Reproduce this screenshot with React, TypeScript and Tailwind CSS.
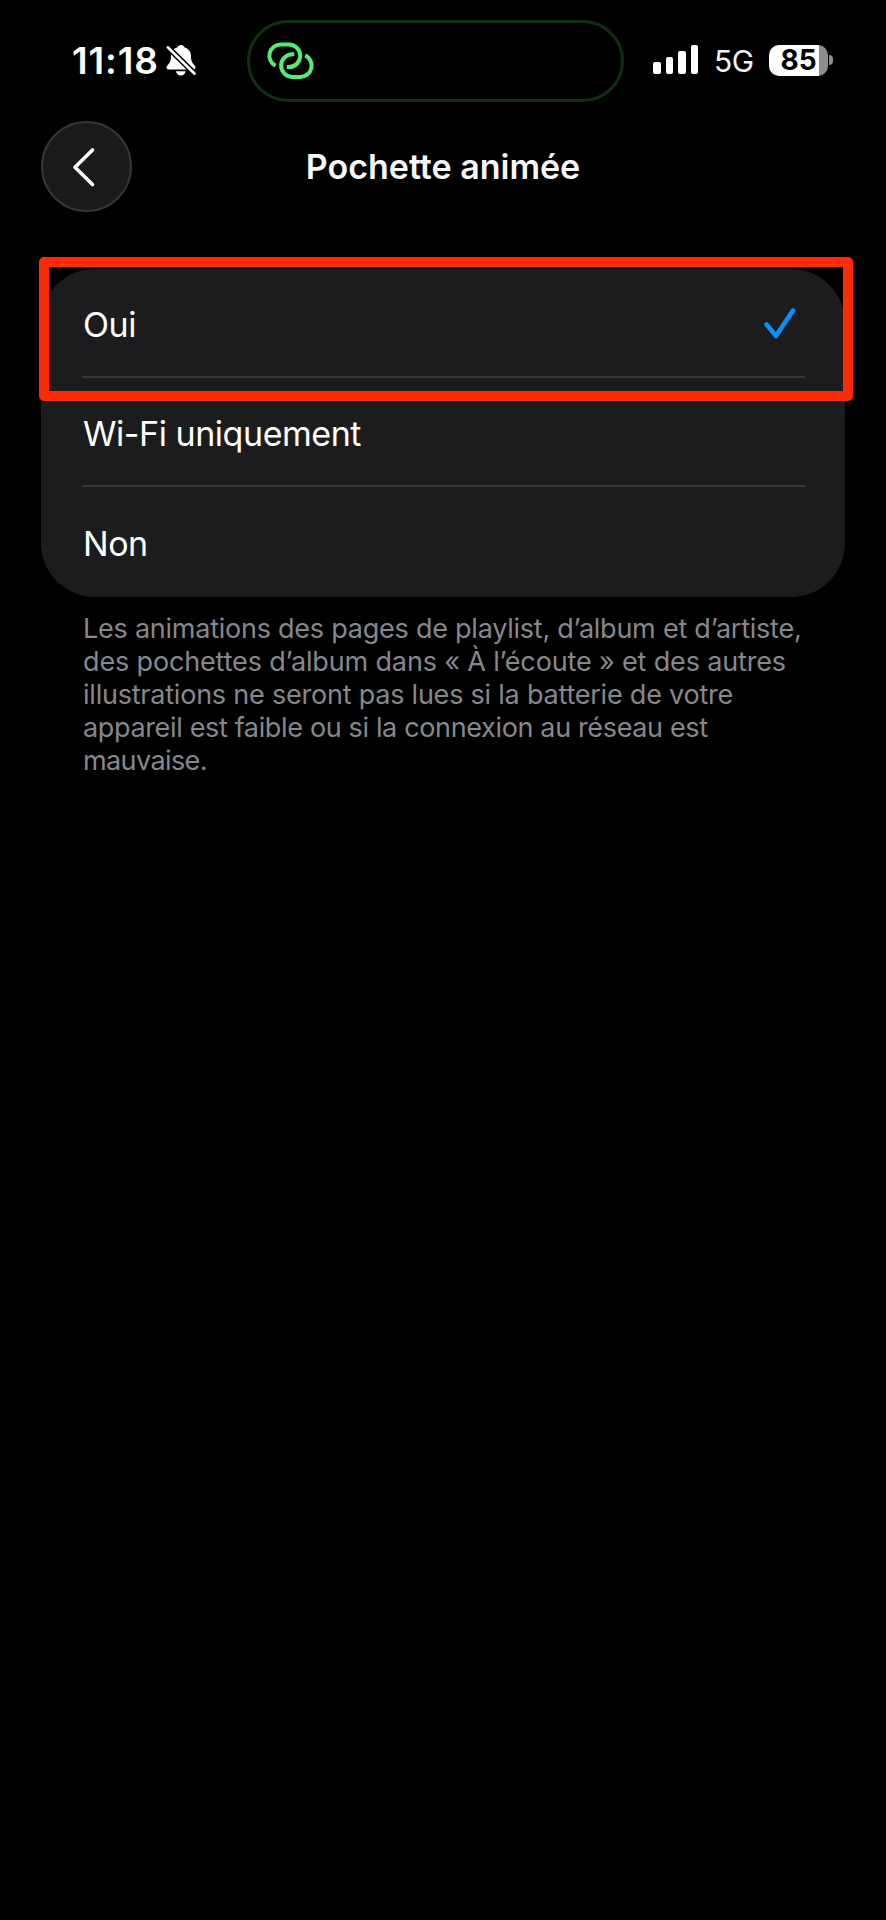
import React from 'react';

interface Option {
  id: string;
  label: string;
}

const options: Option[] = [
  { id: 'on', label: 'Oui' },
  { id: 'wifi', label: 'Wi-Fi uniquement' },
  { id: 'off', label: 'Non' },
];

const footnote = [
  { text: 'Les animations des pages de playlist, d’album et d’artiste,', tracking: 'tracking-[-0.24px]' },
  { text: 'des pochettes d’album dans « À l’écoute » et des autres', tracking: 'tracking-[-0.15px]' },
  { text: 'illustrations ne seront pas lues si la batterie de votre', tracking: 'tracking-[-0.22px]' },
  { text: 'appareil est faible ou si la connexion au réseau est', tracking: 'tracking-[-0.35px]' },
  { text: 'mauvaise.', tracking: 'tracking-[-0.6px]' },
];

function BellOffIcon() {
  return (
    <svg width="32" height="34" viewBox="0 0 32 34" fill="none">
      <path
        d="M16 1c-1.900 0-3.300 1-3.700 2.400C8 4.600 6 8 6 12c0 5-1.300 6.900-3 8.700C2 21.800 1.500 22.600 1.500 23.500c0 1.200.9 1.900 2.200 1.900h24.600c1.300 0 2.200-.7 2.200-1.900 0-.9-.5-1.700-1.500-2.800-1.700-1.800-3-3.700-3-8.700 0-4-2-7.400-6.300-8.600C19.300 2 17.900 1 16 1z"
        fill="#fff"
      />
      <path d="M11 27.200h9.600c-.4 2.600-2.200 4.300-4.800 4.300s-4.400-1.700-4.800-4.300z" fill="#fff" />
      <path d="M1 1.500 31 31" stroke="#000" strokeWidth="5.600" />
      <path d="M2.800 3.300 29.600 29.700" stroke="#fff" strokeWidth="2.600" strokeLinecap="round" />
    </svg>
  );
}

function LinkIcon() {
  return (
    <svg width="50" height="38" viewBox="0 0 50 38" fill="none" stroke="#52ec78" strokeWidth="4">
      <path d="M10.500 23.800A11.200 11.200 0 0 1 15.500 2.600H24a11.200 11.200 0 0 1 0 22.400h-2.300" />
      <path d="M29.300 12.300h-1.900a11.300 11.300 0 0 0 0 22.600h8a11.300 11.300 0 0 0 4.800-21.500" />
    </svg>
  );
}

function StatusBar() {
  return (
    <div className="flex h-[102px] items-start pt-5">
      <div className="flex w-[247px] items-center pl-[72px] pt-[23px]">
        <span className="w-[93px] text-[37px] leading-[36px] font-semibold tracking-[0.9px]">11:18</span>
        <BellOffIcon />
      </div>
      <div className="flex h-[82px] w-[377px] items-center rounded-full border-[3px] border-[#10300f] pl-[15px]">
        <LinkIcon />
      </div>
      <div className="flex pl-[29px] pt-6">
        <div className="flex h-[30px] items-end gap-[5px]">
          <div className="h-3 w-[7.500px] rounded-[2px] bg-white" />
          <div className="h-[17px] w-[7.500px] rounded-[2px] bg-white" />
          <div className="h-[23px] w-[7.500px] rounded-[2px] bg-white" />
          <div className="h-[29px] w-[7.500px] rounded-[2px] bg-white" />
        </div>
        <span className="ml-4 w-[55px] pt-[1px] text-[30px] leading-[32px] tracking-[-0.5px] text-[#f2f2f2]">5G</span>
        <div className="flex h-[32px] items-center gap-[1px]">
          <div className="flex h-[31px] w-[59px] items-center justify-center rounded-[10px] bg-[linear-gradient(to_right,#fff_50px,#8e8e8e_50px)] text-[28px] leading-[31px] font-bold text-black">
            85
          </div>
          <div className="h-[10px] w-1 rounded-r-full bg-[#8e8e8e]" />
        </div>
      </div>
    </div>
  );
}

function NavBar() {
  return (
    <header className="flex items-center justify-between px-[41px] pt-[19px]">
      <button
        aria-label="Retour"
        className="flex h-[91px] w-[91px] items-center justify-center rounded-full border-2 border-[#353535] bg-[#1a1a1a]"
      >
        <svg width="30" height="42" viewBox="0 0 30 42" fill="none" stroke="#fff" strokeWidth="3.600" strokeLinecap="round" strokeLinejoin="round">
          <path d="M20.500 4 3 21.200l17.500 17.300" />
        </svg>
      </button>
      <h1 className="text-[34px] leading-[40px] font-semibold text-[#f7f7f7]">Pochette animée</h1>
      <div className="w-[91px]" />
    </header>
  );
}

export default function App() {
  const selected = 'on';

  return (
    <div className="h-[1920px] w-[886px] overflow-hidden bg-black font-['Inter',sans-serif] text-white">
      <StatusBar />
      <NavBar />

      <main className="px-[41px] pt-[57px]">
        <div className="relative">
          <ul className="h-[328px] rounded-[54px] bg-[#1c1c1e] pl-[41px] pr-10">
            {options.map((option, index) => (
              <li
                key={option.id}
                className={`flex h-[109px] items-center justify-between ${index < options.length - 1 ? 'border-b-2 border-[#38383a]' : ''}`}
              >
                <span className="pt-1 pl-[1px] text-[34px] leading-[40px] tracking-[-0.45px]">{option.label}</span>
                {option.id === selected && (
                  <svg width="34" height="34" viewBox="0 0 34 34" className="mr-2" fill="none" stroke="#0b90f5" strokeWidth="4.600" strokeLinecap="round" strokeLinejoin="round">
                    <path d="M3.500 18.500 13 30 30 4.500" />
                  </svg>
                )}
              </li>
            ))}
          </ul>
          {/* Highlight frame over the first row */}
          <div className="pointer-events-none absolute -top-3 -left-[2px] h-[144px] w-[814px] rounded-[5px] border-[10px] border-[#fd2b05]" />
        </div>

        <p className="pl-[42px] pt-[15px] text-[27px] leading-[33px] text-[#87878c]">
          {footnote.map((line) => (
            <span key={line.text} className={`block whitespace-nowrap ${line.tracking}`}>
              {line.text}
            </span>
          ))}
        </p>
      </main>
    </div>
  );
}
